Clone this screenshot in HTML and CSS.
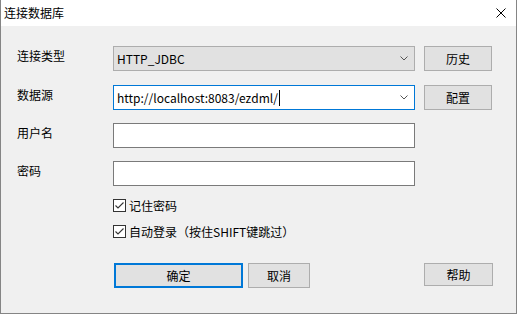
FILE: index.html
```
<html lang="zh-CN">
<head>
    <meta charset="UTF-8">
    <meta name="viewport" content="width=device-width, initial-scale=1.0">
    <title>连接数据库</title>
    <link rel="stylesheet" href="styles.css">
</head>
<body>
    <div class="window">
        <div class="titlebar">
            <span class="title">连接数据库</span>
            <svg class="close" width="10" height="10" viewBox="0 0 10 10">
                <path d="M0.5 0.5 L9.5 9.5 M9.5 0.5 L0.5 9.5" stroke="#000" stroke-width="1" fill="none"/>
            </svg>
        </div>
        <div class="content">
            <div class="row">
                <span class="label">连接类型</span>
                <div class="combo combo-locked">
                    <span class="combo-text">HTTP_JDBC</span>
                    <svg class="chevron" width="8" height="5" viewBox="0 0 8 5"><polyline points="0.5,0.5 4,4 7.5,0.5" stroke="#555" fill="none"/></svg>
                </div>
                <button class="btn btn-side">历史</button>
            </div>
            <div class="row">
                <span class="label">数据源</span>
                <div class="combo combo-focus">
                    <span class="combo-text">http://localhost:8083/ezdml/<span class="caret"></span></span>
                    <svg class="chevron" width="8" height="5" viewBox="0 0 8 5"><polyline points="0.5,0.5 4,4 7.5,0.5" stroke="#555" fill="none"/></svg>
                </div>
                <button class="btn btn-side">配置</button>
            </div>
            <div class="row">
                <span class="label">用户名</span>
                <input class="field" type="text">
            </div>
            <div class="row">
                <span class="label">密码</span>
                <input class="field" type="password">
            </div>
            <div class="checks">
                <div class="check">
                    <span class="box"><svg width="11" height="11" viewBox="0 0 11 11"><polyline points="1.5,5.5 4,8 9.5,2.5" stroke="#333" stroke-width="1.1" fill="none"/></svg></span>
                    <span>记住密码</span>
                </div>
                <div class="check">
                    <span class="box"><svg width="11" height="11" viewBox="0 0 11 11"><polyline points="1.5,5.5 4,8 9.5,2.5" stroke="#333" stroke-width="1.1" fill="none"/></svg></span>
                    <span>自动登录（按住SHIFT键跳过）</span>
                </div>
            </div>
            <div class="actions">
                <button class="btn btn-ok">确定</button>
                <button class="btn btn-cancel">取消</button>
                <button class="btn btn-help">帮助</button>
            </div>
        </div>
    </div>
</body>
</html>
```
FILE: styles.css
```
body {
    margin: 0;
    font-family: "Noto Sans CJK SC", "Noto Sans", sans-serif;
    font-size: 12px;
    color: #000;
}
.window {
    width: 517px;
    height: 314px;
    box-sizing: border-box;
    background: #f0f0f0;
    border: 1px solid #858585;
    border-top: none;
}
.titlebar {
    height: 26px;
    background: #fff;
    display: flex;
    align-items: center;
    padding-left: 3px;
    padding-right: 10px;
}
.title {
    flex: 1;
    line-height: 26px;
}
.content {
    padding: 20px 0 0 15px;
}
.row {
    display: flex;
    height: 25px;
    margin-bottom: 13px;
}
.row:first-child {
    margin-bottom: 14px;
}
.label {
    width: 97px;
    line-height: 20px;
    padding-left: 1px;
    box-sizing: border-box;
}
.combo {
    width: 302px;
    height: 25px;
    box-sizing: border-box;
    display: flex;
    align-items: center;
    padding: 0 6px 0 3px;
}
.combo-locked {
    background: #e1e1e1;
    border: 1px solid #adadad;
}
.combo-focus {
    background: #fff;
    border: 1px solid #0078d7;
}
.combo-text {
    flex: 1;
    display: flex;
    align-items: center;
}
.caret {
    display: inline-block;
    width: 1px;
    height: 16px;
    background: #000;
    margin-left: 1px;
}
.btn {
    font-family: inherit;
    font-size: 12px;
    color: #000;
    background: #e1e1e1;
    border: 1px solid #adadad;
    padding: 0;
    height: 25px;
    box-sizing: border-box;
}
.btn-side {
    width: 68px;
    margin-left: 9px;
}
.field {
    width: 302px;
    height: 25px;
    box-sizing: border-box;
    border: 1px solid #7a7a7a;
    background: #fff;
    margin: 0;
}
.checks {
    padding-left: 97px;
    display: flex;
    flex-direction: column;
    gap: 13px;
}
.check {
    display: flex;
    align-items: center;
    height: 13px;
}
.box {
    width: 13px;
    height: 13px;
    box-sizing: border-box;
    border: 1px solid #333;
    background: #fff;
    margin-right: 3px;
    display: flex;
}
.actions {
    display: flex;
    align-items: flex-start;
    margin-top: 25px;
    padding-left: 98px;
}
.btn-ok {
    width: 129px;
    border: 2px solid #0078d7;
}
.btn-cancel {
    width: 62px;
    margin-left: 5px;
}
.btn-help {
    width: 69px;
    height: 23px;
    margin-left: 114px;
}
```
